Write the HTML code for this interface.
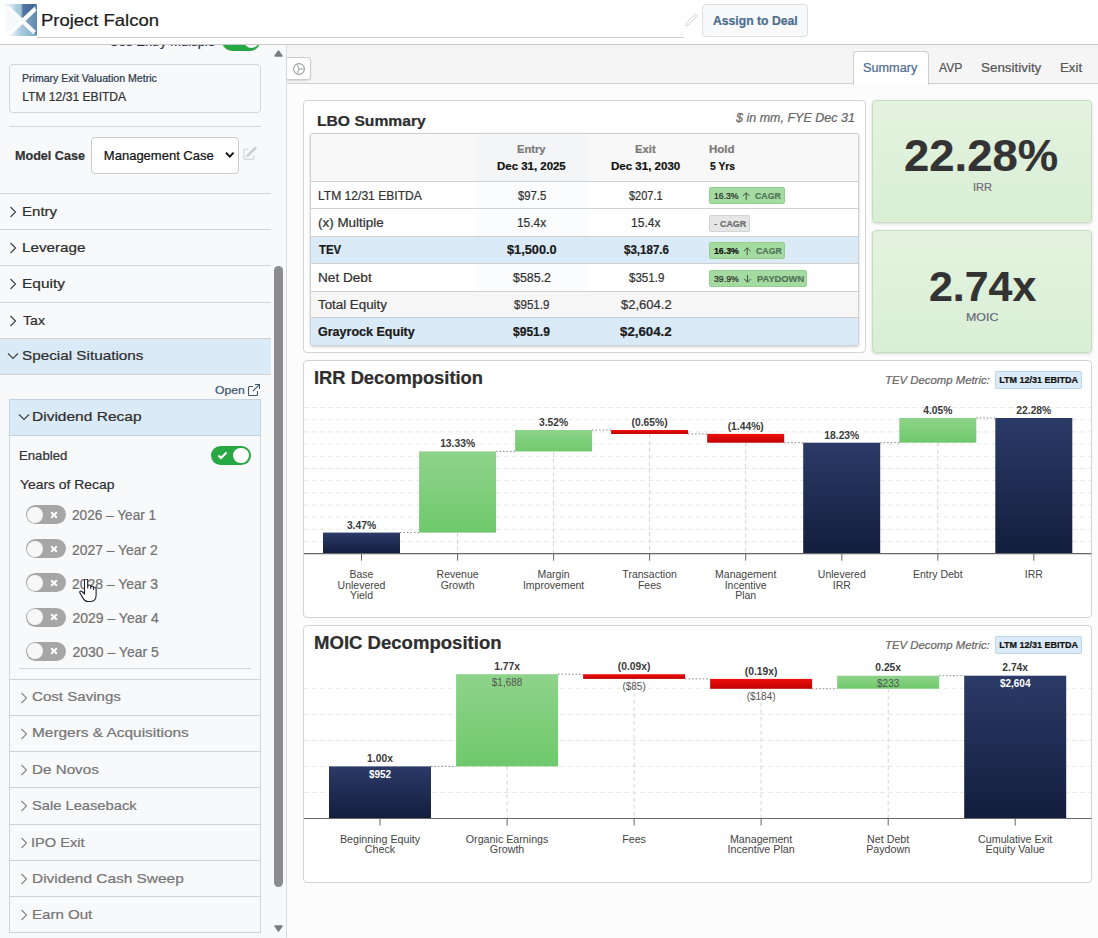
<!DOCTYPE html><html><head><meta charset="utf-8"><title>Project Falcon</title><style>
*{box-sizing:border-box;margin:0;padding:0}
html,body{width:1098px;height:938px;overflow:hidden;background:#fcfcfc;font-family:"Liberation Sans",sans-serif;color:#333}
.abs{position:absolute}
.t{position:absolute;white-space:nowrap;line-height:1;-webkit-text-stroke:0.22px currentColor}
#hdr{left:0;top:0;width:1098px;height:45px;background:#fff;border-bottom:1px solid #c9c9c9}
#side{left:0;top:45px;width:287px;height:893px;background:#f8f9fb;border-right:1px solid #dcdcdc}
#tabs{left:287px;top:45px;width:811px;height:39px;background:#f5f5f5;border-bottom:1px solid #cfcfcf}
.card{position:absolute;background:#fff;border:1px solid #d4d4d4;border-radius:4px}
.acc{position:absolute;left:0;width:271px;border-top:1px solid #d2d2d2}
.acc2{position:absolute;left:9px;width:252px;border:1px solid #d2d2d2}
.sw{position:absolute;width:40px;height:19px;border-radius:10px}
.row{position:absolute;left:311px;width:547px;border-top:1px solid #d0d0d0}
.bdg{position:absolute;border-radius:2px}
</style></head><body>
<div id="hdr" class="abs"></div>
<svg class="abs" style="left:5px;top:4px" width="32" height="32" viewBox="0 0 32 32">
<defs>
<linearGradient id="lt" x1="0" y1="0" x2="1" y2="0"><stop offset="0" stop-color="#e4eff8"/><stop offset="0.22" stop-color="#cfe3f2"/><stop offset="0.36" stop-color="#a9cddc"/><stop offset="0.5" stop-color="#a2c8d9"/><stop offset="0.56" stop-color="#5577a5"/><stop offset="1" stop-color="#3d5d92"/></linearGradient>
<linearGradient id="lr" x1="0" y1="0" x2="1" y2="0"><stop offset="0" stop-color="#86aecb"/><stop offset="1" stop-color="#5f88b0"/></linearGradient>
<linearGradient id="lb" x1="0" y1="0" x2="1" y2="0"><stop offset="0" stop-color="#edf4fa"/><stop offset="0.3" stop-color="#d3e4f3"/><stop offset="0.5" stop-color="#a9cbdc"/><stop offset="1" stop-color="#7fa9c6"/></linearGradient>
</defs>
<rect width="32" height="32" fill="#eff5fa"/>
<path d="M0 0 H32 L16 16 Z" fill="url(#lt)"/>
<path d="M32 0 V32 L16 16 Z" fill="url(#lr)"/>
<path d="M0 32 H32 L16 16 Z" fill="url(#lb)"/>
<path d="M0 3 L3 1 L31 27 L28 30 Z" fill="#fdfeff"/>
<path d="M29.5 3 L31.5 6.5 L5 32 L0 32 L0 30 Z" fill="#fdfeff"/>
<path d="M0 4 L13 16 L0 30 Z" fill="#fff" opacity="0.5"/>
</svg>
<div class="t" style="left:40.52px;top:20.5px;font-size:15.8px;color:#1c1c1c;font-weight:normal;font-style:normal;transform-origin:0 50%;transform:translate(0,-50%) scaleX(1.1685);">Project Falcon</div>
<div class="abs" style="left:37px;top:37px;width:647px;height:1px;background:#cdcdcd"></div>
<svg class="abs" style="left:684px;top:13px" width="14" height="14" viewBox="0 0 14 14"><path d="M1.6 12.6 L2.2 10.2 L10.6 1.8 a1.3 1.3 0 0 1 1.9 1.9 L4.1 12.1 Z M9.6 2.8 L11.5 4.7" fill="none" stroke="#cfcfcf" stroke-width="0.9"/></svg>
<div class="abs" style="left:702px;top:4px;width:106px;height:33px;border:1px solid #dcdfe3;border-radius:4px;background:#f8f9fa"></div>
<div class="t" style="left:713.15px;top:21.0px;font-size:12px;color:#4d6d8e;font-weight:bold;font-style:normal;transform-origin:0 50%;transform:translate(0,-50%) scaleX(1.0151);">Assign to Deal</div>
<div id="side" class="abs"></div>
<div id="tabs" class="abs"></div>
<div class="abs" style="left:200px;top:45px;width:70px;height:8px;overflow:hidden"><div class="abs" style="left:21.5px;top:-14px;width:38.5px;height:19.6px;border-radius:10px;background:#28a745"></div><div class="abs" style="left:43.5px;top:-12.3px;width:15.5px;height:15.5px;border-radius:8px;background:#fff"></div></div>
<div class="abs" style="left:108px;top:45px;width:110px;height:3.6px;overflow:hidden"><div class="t" style="left:1.5px;top:-9.6px;font-size:13px;color:#1e2a3c;transform-origin:0 0;transform:scaleX(1.0)">Use Entry Multiple</div></div>
<div class="abs" style="left:9px;top:64px;width:252px;height:49px;border:1px solid #cfd5dc;border-radius:4px;background:#f8f9fb"></div>
<div class="t" style="left:22.36px;top:78.5px;font-size:10px;color:#2c3a4c;font-weight:normal;font-style:normal;transform-origin:0 50%;transform:translate(0,-50%) scaleX(1.0561);">Primary Exit Valuation Metric</div>
<div class="t" style="left:22.23px;top:96.8px;font-size:12.1px;color:#333;font-weight:normal;font-style:normal;transform-origin:0 50%;transform:translate(0,-50%);">LTM 12/31 EBITDA</div>
<div class="abs" style="left:9px;top:126px;width:252px;height:1px;background:#d5d5d5"></div>
<div class="t" style="left:15.28px;top:155px;font-size:13px;color:#333;font-weight:bold;font-style:normal;transform-origin:0 50%;transform:translate(0,-50%) scaleX(0.9679);">Model Case</div>
<div class="abs" style="left:91px;top:137px;width:148px;height:37px;border:1px solid #ccc;border-radius:4px;background:#fff"></div>
<div class="t" style="left:103.86px;top:154.9px;font-size:13px;color:#111;font-weight:normal;font-style:normal;transform-origin:0 50%;transform:translate(0,-50%);">Management Case</div>
<svg class="abs" style="left:225px;top:151.3px" width="10" height="8" viewBox="0 0 10 8"><path d="M1 1.6 L4.8 5.6 L8.6 1.6" fill="none" stroke="#111" stroke-width="2"/></svg>
<svg class="abs" style="left:243px;top:146px" width="15" height="15" viewBox="0 0 15 15"><path d="M11 9 V12.3 a1 1 0 0 1 -1 1 H2 a1 1 0 0 1 -1 -1 V4.3 a1 1 0 0 1 1 -1 H5.5" fill="none" stroke="#d9dcdf" stroke-width="1.5"/><path d="M3.2 11.2 L3.8 8.6 L11.3 1.1 a1.2 1.2 0 0 1 1.9 1.9 L5.8 10.5 Z" fill="#cfcfcf"/></svg>
<div class="acc" style="top:193px;height:36px"></div>
<svg class="abs" style="left:9px;top:205.5px" width="8" height="12" viewBox="0 0 8 12"><path d="M1.5 1 L6.5 6 L1.5 11" fill="none" stroke="#444" stroke-width="1.2"/></svg>
<div class="t" style="left:21.70px;top:211.9px;font-size:13.5px;color:#2e2e2e;font-weight:normal;font-style:normal;transform-origin:0 50%;transform:translate(0,-50%) scaleX(1.1136);">Entry</div>
<div class="acc" style="top:229px;height:36px"></div>
<svg class="abs" style="left:9px;top:241.5px" width="8" height="12" viewBox="0 0 8 12"><path d="M1.5 1 L6.5 6 L1.5 11" fill="none" stroke="#444" stroke-width="1.2"/></svg>
<div class="t" style="left:21.68px;top:247.9px;font-size:13.5px;color:#2e2e2e;font-weight:normal;font-style:normal;transform-origin:0 50%;transform:translate(0,-50%) scaleX(1.1285);">Leverage</div>
<div class="acc" style="top:265px;height:37px"></div>
<svg class="abs" style="left:9px;top:277.5px" width="8" height="12" viewBox="0 0 8 12"><path d="M1.5 1 L6.5 6 L1.5 11" fill="none" stroke="#444" stroke-width="1.2"/></svg>
<div class="t" style="left:21.66px;top:283.9px;font-size:13.5px;color:#2e2e2e;font-weight:normal;font-style:normal;transform-origin:0 50%;transform:translate(0,-50%) scaleX(1.1440);">Equity</div>
<div class="acc" style="top:302px;height:36px"></div>
<svg class="abs" style="left:9px;top:314.5px" width="8" height="12" viewBox="0 0 8 12"><path d="M1.5 1 L6.5 6 L1.5 11" fill="none" stroke="#444" stroke-width="1.2"/></svg>
<div class="t" style="left:22.62px;top:320.9px;font-size:13.5px;color:#2e2e2e;font-weight:normal;font-style:normal;transform-origin:0 50%;transform:translate(0,-50%) scaleX(1.0443);">Tax</div>
<div class="acc" style="top:338px;height:37px;background:#dbeaf7;border-bottom:1px solid #d2d2d2"></div>
<svg class="abs" style="left:7px;top:352px" width="12" height="8" viewBox="0 0 12 8"><path d="M1 1.5 L6 6.5 L11 1.5" fill="none" stroke="#444" stroke-width="1.2"/></svg>
<div class="t" style="left:22.01px;top:356.2px;font-size:13.5px;color:#2e2e2e;font-weight:normal;font-style:normal;transform-origin:0 50%;transform:translate(0,-50%) scaleX(1.1313);">Special Situations</div>
<div class="t" style="left:214.85px;top:390px;font-size:11px;color:#3c5570;font-weight:normal;font-style:normal;transform-origin:0 50%;transform:translate(0,-50%) scaleX(1.1018);">Open</div>
<svg class="abs" style="left:247px;top:383px" width="14" height="14" viewBox="0 0 14 14"><path d="M10.5 8 V11.5 a1 1 0 0 1 -1 1 H2.5 a1 1 0 0 1 -1 -1 V4.5 a1 1 0 0 1 1 -1 H6" fill="none" stroke="#456" stroke-width="1.1"/><path d="M8 1.5 H12.5 V6 M12.5 1.5 L6 8" fill="none" stroke="#456" stroke-width="1.1"/></svg>
<div class="abs" style="left:9px;top:399px;width:252px;height:281px;border:1px solid #cfd5dc;background:#f8f9fb"></div>
<div class="abs" style="left:9px;top:399px;width:252px;height:37px;border:1px solid #c5d3e0;background:#dbeaf7"></div>
<svg class="abs" style="left:18px;top:412.8px" width="12" height="8" viewBox="0 0 12 8"><path d="M1 1.5 L6 6.5 L11 1.5" fill="none" stroke="#444" stroke-width="1.2"/></svg>
<div class="t" style="left:31.66px;top:416.8px;font-size:13.5px;color:#2e2e2e;font-weight:normal;font-style:normal;transform-origin:0 50%;transform:translate(0,-50%) scaleX(1.1495);">Dividend Recap</div>
<div class="t" style="left:19.45px;top:455.8px;font-size:12.7px;color:#333;font-weight:normal;font-style:normal;transform-origin:0 50%;transform:translate(0,-50%) scaleX(1.0365);">Enabled</div>
<div class="sw" style="left:211px;top:446px;background:#28a745"></div>
<div class="abs" style="left:233px;top:448px;width:16px;height:15px;border-radius:8px;background:#fff"></div>
<svg class="abs" style="left:217px;top:451px" width="11" height="9" viewBox="0 0 11 9"><path d="M1.5 4.5 L4 7 L9.5 1.5" fill="none" stroke="#fff" stroke-width="2.2"/></svg>
<div class="t" style="left:20.15px;top:484.6px;font-size:13.5px;color:#2e2e2e;font-weight:normal;font-style:normal;transform-origin:0 50%;transform:translate(0,-50%) scaleX(1.0283);">Years of Recap</div>
<div class="sw" style="left:26px;top:505.1px;background:#a6a6a6"></div>
<div class="abs" style="left:27px;top:506.6px;width:16px;height:16px;border-radius:8px;background:#f7f7f7"></div>
<svg class="abs" style="left:50px;top:510.6px" width="8" height="8" viewBox="0 0 8 8"><path d="M1.2 1.2 L6.8 6.8 M6.8 1.2 L1.2 6.8" fill="none" stroke="#fff" stroke-width="2"/></svg>
<div class="t" style="left:72.42px;top:515.4px;font-size:14px;color:#727272;font-weight:normal;font-style:normal;transform-origin:0 50%;transform:translate(0,-50%) scaleX(0.9735);">2026 – Year 1</div>
<div class="sw" style="left:26px;top:539.2px;background:#a6a6a6"></div>
<div class="abs" style="left:27px;top:540.7px;width:16px;height:16px;border-radius:8px;background:#f7f7f7"></div>
<svg class="abs" style="left:50px;top:544.7px" width="8" height="8" viewBox="0 0 8 8"><path d="M1.2 1.2 L6.8 6.8 M6.8 1.2 L1.2 6.8" fill="none" stroke="#fff" stroke-width="2"/></svg>
<div class="t" style="left:72.41px;top:549.5px;font-size:14px;color:#727272;font-weight:normal;font-style:normal;transform-origin:0 50%;transform:translate(0,-50%) scaleX(0.9908);">2027 – Year 2</div>
<div class="sw" style="left:26px;top:573.3px;background:#a6a6a6"></div>
<div class="abs" style="left:27px;top:574.8px;width:16px;height:16px;border-radius:8px;background:#f7f7f7"></div>
<svg class="abs" style="left:50px;top:578.8px" width="8" height="8" viewBox="0 0 8 8"><path d="M1.2 1.2 L6.8 6.8 M6.8 1.2 L1.2 6.8" fill="none" stroke="#fff" stroke-width="2"/></svg>
<div class="t" style="left:72.40px;top:583.5999999999999px;font-size:14px;color:#727272;font-weight:normal;font-style:normal;transform-origin:0 50%;transform:translate(0,-50%) scaleX(0.9951);">2028 – Year 3</div>
<div class="sw" style="left:26px;top:607.5px;background:#a6a6a6"></div>
<div class="abs" style="left:27px;top:609px;width:16px;height:16px;border-radius:8px;background:#f7f7f7"></div>
<svg class="abs" style="left:50px;top:613px" width="8" height="8" viewBox="0 0 8 8"><path d="M1.2 1.2 L6.8 6.8 M6.8 1.2 L1.2 6.8" fill="none" stroke="#fff" stroke-width="2"/></svg>
<div class="t" style="left:72.40px;top:617.8px;font-size:14px;color:#727272;font-weight:normal;font-style:normal;transform-origin:0 50%;transform:translate(0,-50%);">2029 – Year 4</div>
<div class="sw" style="left:26px;top:641.5px;background:#a6a6a6"></div>
<div class="abs" style="left:27px;top:643px;width:16px;height:16px;border-radius:8px;background:#f7f7f7"></div>
<svg class="abs" style="left:50px;top:647px" width="8" height="8" viewBox="0 0 8 8"><path d="M1.2 1.2 L6.8 6.8 M6.8 1.2 L1.2 6.8" fill="none" stroke="#fff" stroke-width="2"/></svg>
<div class="t" style="left:72.40px;top:651.8px;font-size:14px;color:#727272;font-weight:normal;font-style:normal;transform-origin:0 50%;transform:translate(0,-50%);">2030 – Year 5</div>
<div class="abs" style="left:19px;top:668px;width:232px;height:1px;background:#cfd5dc"></div>
<div class="acc2" style="top:679px;height:37px"></div>
<svg class="abs" style="left:20px;top:691.5px" width="8" height="12" viewBox="0 0 8 12"><path d="M1.5 1 L6.5 6 L1.5 11" fill="none" stroke="#888" stroke-width="1.2"/></svg>
<div class="t" style="left:32.05px;top:697.3px;font-size:13.5px;color:#757575;font-weight:normal;font-style:normal;transform-origin:0 50%;transform:translate(0,-50%) scaleX(1.1178);">Cost Savings</div>
<div class="acc2" style="top:715px;height:37px"></div>
<svg class="abs" style="left:20px;top:727.5px" width="8" height="12" viewBox="0 0 8 12"><path d="M1.5 1 L6.5 6 L1.5 11" fill="none" stroke="#888" stroke-width="1.2"/></svg>
<div class="t" style="left:31.57px;top:733.3px;font-size:13.5px;color:#757575;font-weight:normal;font-style:normal;transform-origin:0 50%;transform:translate(0,-50%) scaleX(1.1419);">Mergers &amp; Acquisitions</div>
<div class="acc2" style="top:751px;height:37px"></div>
<svg class="abs" style="left:20px;top:763.5px" width="8" height="12" viewBox="0 0 8 12"><path d="M1.5 1 L6.5 6 L1.5 11" fill="none" stroke="#888" stroke-width="1.2"/></svg>
<div class="t" style="left:31.58px;top:770.0999999999999px;font-size:13.5px;color:#757575;font-weight:normal;font-style:normal;transform-origin:0 50%;transform:translate(0,-50%) scaleX(1.1263);">De Novos</div>
<div class="acc2" style="top:787px;height:38px"></div>
<svg class="abs" style="left:20px;top:799.5px" width="8" height="12" viewBox="0 0 8 12"><path d="M1.5 1 L6.5 6 L1.5 11" fill="none" stroke="#888" stroke-width="1.2"/></svg>
<div class="t" style="left:32.14px;top:806.3px;font-size:13.5px;color:#757575;font-weight:normal;font-style:normal;transform-origin:0 50%;transform:translate(0,-50%) scaleX(1.0886);">Sale Leaseback</div>
<div class="acc2" style="top:824px;height:37px"></div>
<svg class="abs" style="left:20px;top:836.5px" width="8" height="12" viewBox="0 0 8 12"><path d="M1.5 1 L6.5 6 L1.5 11" fill="none" stroke="#888" stroke-width="1.2"/></svg>
<div class="t" style="left:31.49px;top:842.5999999999999px;font-size:13.5px;color:#757575;font-weight:normal;font-style:normal;transform-origin:0 50%;transform:translate(0,-50%) scaleX(1.0810);">IPO Exit</div>
<div class="acc2" style="top:860px;height:37px"></div>
<svg class="abs" style="left:20px;top:872.5px" width="8" height="12" viewBox="0 0 8 12"><path d="M1.5 1 L6.5 6 L1.5 11" fill="none" stroke="#888" stroke-width="1.2"/></svg>
<div class="t" style="left:31.57px;top:878.5999999999999px;font-size:13.5px;color:#757575;font-weight:normal;font-style:normal;transform-origin:0 50%;transform:translate(0,-50%) scaleX(1.1424);">Dividend Cash Sweep</div>
<div class="acc2" style="top:896px;height:37px"></div>
<svg class="abs" style="left:20px;top:908.5px" width="8" height="12" viewBox="0 0 8 12"><path d="M1.5 1 L6.5 6 L1.5 11" fill="none" stroke="#888" stroke-width="1.2"/></svg>
<div class="t" style="left:31.59px;top:914.5999999999999px;font-size:13.5px;color:#757575;font-weight:normal;font-style:normal;transform-origin:0 50%;transform:translate(0,-50%) scaleX(1.1163);">Earn Out</div>
<svg class="abs" style="left:274px;top:50px" width="9" height="7" viewBox="0 0 9 7"><path d="M4.5 1 L8 6 H1 Z" fill="#7c7c7c" stroke="#7c7c7c" stroke-width="1.4" stroke-linejoin="round"/></svg>
<svg class="abs" style="left:274px;top:925px" width="9" height="7" viewBox="0 0 9 7"><path d="M4.5 6 L8 1 H1 Z" fill="#7c7c7c" stroke="#7c7c7c" stroke-width="1.4" stroke-linejoin="round"/></svg>
<div class="abs" style="left:274px;top:266px;width:9px;height:621px;border-radius:5px;background:#8c8c8c"></div>
<div class="abs" style="left:287px;top:57px;width:24px;height:23px;background:#fefefe;border:1px solid #cdcdcd;border-left:none;border-radius:0 4px 4px 0;box-shadow:0 1px 2px rgba(0,0,0,0.12)"></div>
<svg class="abs" style="left:292px;top:61.9px" width="14" height="14" viewBox="0 0 14 14"><circle cx="7" cy="7" r="5.4" fill="none" stroke="#9aa0a6" stroke-width="1.1"/><path d="M5.4 2.6 Q8.2 7 5.4 11.4 M7 7 H11.6" stroke="#9aa0a6" stroke-width="1" fill="none"/></svg>
<div class="abs" style="left:853px;top:51px;width:76px;height:34px;background:#fff;border:1px solid #cfcfcf;border-bottom:none;border-radius:4px 4px 0 0"></div>
<div class="t" style="left:863.43px;top:68.3px;font-size:12.5px;color:#4d6d8e;font-weight:normal;font-style:normal;transform-origin:0 50%;transform:translate(0,-50%) scaleX(1.0163);">Summary</div>
<div class="t" style="left:939.20px;top:68px;font-size:12.5px;color:#555;font-weight:normal;font-style:normal;transform-origin:0 50%;transform:translate(0,-50%) scaleX(0.9728);">AVP</div>
<div class="t" style="left:980.90px;top:68px;font-size:12.5px;color:#555;font-weight:normal;font-style:normal;transform-origin:0 50%;transform:translate(0,-50%) scaleX(1.0721);">Sensitivity</div>
<div class="t" style="left:1060.34px;top:68px;font-size:12.5px;color:#555;font-weight:normal;font-style:normal;transform-origin:0 50%;transform:translate(0,-50%) scaleX(1.0582);">Exit</div>
<div class="card" style="left:303px;top:100px;width:563px;height:253px"></div>
<div class="t" style="left:317.18px;top:120.5px;font-size:14px;color:#2e2e2e;font-weight:bold;font-style:normal;transform-origin:0 50%;transform:translate(0,-50%) scaleX(1.1179);">LBO Summary</div>
<div class="t" style="left:736.06px;top:118px;font-size:12.5px;color:#666;font-weight:normal;font-style:italic;transform-origin:0 50%;transform:translate(0,-50%);">$ in mm, FYE Dec 31</div>
<div class="abs" style="left:310px;top:133px;width:549px;height:213px;border:1px solid #d0d0d0;border-radius:3px;background:#fff;box-shadow:0 1px 3px rgba(0,0,0,0.2)"></div>
<div class="abs" style="left:311px;top:134px;width:547px;height:47px;background:#f8f8f8;border-radius:3px 3px 0 0"></div>
<div class="abs" style="left:476px;top:134px;width:112px;height:183px;background:rgba(120,140,170,0.028)"></div>
<div class="row" style="top:181px;height:27px;"></div>
<div class="t" style="left:317.73px;top:195.7px;font-size:12px;color:#333;font-weight:normal;font-style:normal;transform-origin:0 50%;transform:translate(0,-50%) scaleX(1.0061);">LTM 12/31 EBITDA</div>
<div class="t" style="left:517.84px;top:195.7px;font-size:12.5px;color:#333;font-weight:normal;font-style:normal;transform-origin:0 50%;transform:translate(0,-50%) scaleX(0.9045);">$97.5</div>
<div class="t" style="left:629.39px;top:195.7px;font-size:12.5px;color:#333;font-weight:normal;font-style:normal;transform-origin:0 50%;transform:translate(0,-50%) scaleX(0.8785);">$207.1</div>
<div class="row" style="top:208px;height:28px;"></div>
<div class="t" style="left:317.89px;top:222.8px;font-size:12px;color:#333;font-weight:normal;font-style:normal;transform-origin:0 50%;transform:translate(0,-50%) scaleX(1.1186);">(x) Multiple</div>
<div class="t" style="left:516.86px;top:222.8px;font-size:12.5px;color:#333;font-weight:normal;font-style:normal;transform-origin:0 50%;transform:translate(0,-50%) scaleX(0.9525);">15.4x</div>
<div class="t" style="left:630.90px;top:222.8px;font-size:12.5px;color:#333;font-weight:normal;font-style:normal;transform-origin:0 50%;transform:translate(0,-50%) scaleX(0.9627);">15.4x</div>
<div class="row" style="top:236px;height:27px;background:#dbeaf7;"></div>
<div class="t" style="left:318.59px;top:250.4px;font-size:12px;color:#1a1a1a;font-weight:bold;font-style:normal;transform-origin:0 50%;transform:translate(0,-50%) scaleX(0.9456);">TEV</div>
<div class="t" style="left:507.16px;top:250.4px;font-size:12.5px;color:#1a1a1a;font-weight:bold;font-style:normal;transform-origin:0 50%;transform:translate(0,-50%) scaleX(1.0201);">$1,500.0</div>
<div class="t" style="left:623.63px;top:250.4px;font-size:12.5px;color:#1a1a1a;font-weight:bold;font-style:normal;transform-origin:0 50%;transform:translate(0,-50%) scaleX(0.9250);">$3,187.6</div>
<div class="row" style="top:263px;height:28px;"></div>
<div class="t" style="left:317.61px;top:278px;font-size:12px;color:#333;font-weight:normal;font-style:normal;transform-origin:0 50%;transform:translate(0,-50%) scaleX(1.1334);">Net Debt</div>
<div class="t" style="left:513.03px;top:278px;font-size:12.5px;color:#333;font-weight:normal;font-style:normal;transform-origin:0 50%;transform:translate(0,-50%) scaleX(0.9947);">$585.2</div>
<div class="t" style="left:628.53px;top:278px;font-size:12.5px;color:#333;font-weight:normal;font-style:normal;transform-origin:0 50%;transform:translate(0,-50%) scaleX(0.9238);">$351.9</div>
<div class="row" style="top:291px;height:26px;background:#f6f6f6;"></div>
<div class="t" style="left:318.43px;top:304.9px;font-size:12px;color:#333;font-weight:normal;font-style:normal;transform-origin:0 50%;transform:translate(0,-50%) scaleX(1.1100);">Total Equity</div>
<div class="t" style="left:514.28px;top:304.9px;font-size:12.5px;color:#333;font-weight:normal;font-style:normal;transform-origin:0 50%;transform:translate(0,-50%) scaleX(0.9265);">$951.9</div>
<div class="t" style="left:620.97px;top:304.9px;font-size:12.5px;color:#333;font-weight:normal;font-style:normal;transform-origin:0 50%;transform:translate(0,-50%) scaleX(1.0402);">$2,604.2</div>
<div class="row" style="top:317px;height:28px;background:#dbeaf7;"></div>
<div class="t" style="left:318.20px;top:331.9px;font-size:12px;color:#1a1a1a;font-weight:bold;font-style:normal;transform-origin:0 50%;transform:translate(0,-50%) scaleX(1.0438);">Grayrock Equity</div>
<div class="t" style="left:513.47px;top:331.9px;font-size:12.5px;color:#1a1a1a;font-weight:bold;font-style:normal;transform-origin:0 50%;transform:translate(0,-50%) scaleX(0.9648);">$951.9</div>
<div class="t" style="left:620.35px;top:331.9px;font-size:12.5px;color:#1a1a1a;font-weight:bold;font-style:normal;transform-origin:0 50%;transform:translate(0,-50%) scaleX(1.0618);">$2,604.2</div>
<div class="t" style="left:517.43px;top:149px;font-size:11px;color:#7a7a7a;font-weight:bold;font-style:normal;transform-origin:0 50%;transform:translate(0,-50%) scaleX(1.0134);">Entry</div>
<div class="t" style="left:497.21px;top:166px;font-size:11px;color:#111;font-weight:bold;font-style:normal;transform-origin:0 50%;transform:translate(0,-50%) scaleX(1.0405);">Dec 31, 2025</div>
<div class="t" style="left:635.07px;top:149px;font-size:11px;color:#7a7a7a;font-weight:bold;font-style:normal;transform-origin:0 50%;transform:translate(0,-50%) scaleX(1.0256);">Exit</div>
<div class="t" style="left:611.15px;top:166px;font-size:11px;color:#111;font-weight:bold;font-style:normal;transform-origin:0 50%;transform:translate(0,-50%) scaleX(1.0478);">Dec 31, 2030</div>
<div class="t" style="left:709.35px;top:149px;font-size:11px;color:#7a7a7a;font-weight:bold;font-style:normal;transform-origin:0 50%;transform:translate(0,-50%) scaleX(1.0483);">Hold</div>
<div class="t" style="left:709.79px;top:166px;font-size:11px;color:#111;font-weight:bold;font-style:normal;transform-origin:0 50%;transform:translate(0,-50%) scaleX(0.9380);">5 Yrs</div>
<div class="bdg" style="left:709.4px;top:187.3px;width:75.60000000000002px;height:17.0px;background:#a3dba0;border:1px solid #93d08f"></div>
<div class="t" style="left:713.65px;top:196.2px;font-size:9px;color:#2a2a2a;font-weight:normal;font-style:normal;transform-origin:0 50%;transform:translate(0,-50%) scaleX(0.9623);">16.3%</div>
<svg class="abs" style="left:0;top:0" width="1098" height="300" viewBox="0 0 1098 300"><path d="M746.2 200.1 V192.79999999999998 M742.9000000000001 196.0 L746.2 192.7 L749.5 196.0" fill="none" stroke="#3a4a3a" stroke-width="0.95"/></svg>
<div class="t" style="left:755.45px;top:196.2px;font-size:9px;color:#53745a;font-weight:bold;font-style:normal;transform-origin:0 50%;transform:translate(0,-50%) scaleX(0.9722);">CAGR</div>
<div class="bdg" style="left:709.4px;top:214.5px;width:40.30000000000007px;height:17.900000000000006px;background:#e6e6e6;border:1px solid #d2d2d2"></div>
<div class="t" style="left:713.86px;top:223.7px;font-size:9px;color:#666;font-weight:normal;font-style:normal;transform-origin:0 50%;transform:translate(0,-50%) scaleX(1.0884);">-</div>
<div class="t" style="left:720.04px;top:223.7px;font-size:9px;color:#6b6b6b;font-weight:bold;font-style:normal;transform-origin:0 50%;transform:translate(0,-50%) scaleX(0.9877);">CAGR</div>
<div class="bdg" style="left:709.4px;top:242.4px;width:76.10000000000002px;height:16.99999999999997px;background:#a3dba0;border:1px solid #93d08f"></div>
<div class="t" style="left:713.77px;top:251.3px;font-size:9px;color:#111;font-weight:bold;font-style:normal;transform-origin:0 50%;transform:translate(0,-50%) scaleX(0.9737);">16.3%</div>
<svg class="abs" style="left:0;top:0" width="1098" height="300" viewBox="0 0 1098 300"><path d="M747.2 255.20000000000002 V247.9 M743.9000000000001 251.10000000000002 L747.2 247.8 L750.5 251.10000000000002" fill="none" stroke="#3a4a3a" stroke-width="0.95"/></svg>
<div class="t" style="left:756.15px;top:251.3px;font-size:9px;color:#53745a;font-weight:bold;font-style:normal;transform-origin:0 50%;transform:translate(0,-50%) scaleX(0.9722);">CAGR</div>
<div class="bdg" style="left:709.4px;top:269.5px;width:97.30000000000007px;height:17.80000000000001px;background:#a3dba0;border:1px solid #93d08f"></div>
<div class="t" style="left:713.95px;top:278.7px;font-size:9px;color:#2a2a2a;font-weight:normal;font-style:normal;transform-origin:0 50%;transform:translate(0,-50%) scaleX(0.9702);">39.9%</div>
<svg class="abs" style="left:0;top:0" width="1098" height="300" viewBox="0 0 1098 300"><path d="M747.4 274.8 V282.09999999999997 M744.1 278.9 L747.4 282.2 L750.6999999999999 278.9" fill="none" stroke="#3a4a3a" stroke-width="0.95"/></svg>
<div class="t" style="left:756.59px;top:278.7px;font-size:9px;color:#53745a;font-weight:bold;font-style:normal;transform-origin:0 50%;transform:translate(0,-50%) scaleX(1.0355);">PAYDOWN</div>
<div class="abs" style="left:872px;top:100px;width:220px;height:123px;border:1px solid #c5dcc0;border-radius:4px;background:linear-gradient(#e3f3df,#daeed5);box-shadow:0 1px 3px rgba(0,0,0,0.15)"></div>
<div class="t" style="left:904.46px;top:156.1px;font-size:44.6px;color:#333;font-weight:bold;font-style:normal;transform-origin:0 50%;transform:translate(0,-50%) scaleX(1.0185);">22.28%</div>
<div class="t" style="left:972.86px;top:187.7px;font-size:11.8px;color:#6a6a78;font-weight:normal;font-style:normal;transform-origin:0 50%;transform:translate(0,-50%) scaleX(0.9357);">IRR</div>
<div class="abs" style="left:872px;top:230px;width:220px;height:123px;border:1px solid #c5dcc0;border-radius:4px;background:linear-gradient(#e3f3df,#daeed5);box-shadow:0 1px 3px rgba(0,0,0,0.15)"></div>
<div class="t" style="left:928.55px;top:286.8px;font-size:43.3px;color:#333;font-weight:bold;font-style:normal;transform-origin:0 50%;transform:translate(0,-50%) scaleX(0.9904);">2.74x</div>
<div class="t" style="left:966.16px;top:317.7px;font-size:11.8px;color:#6a6a78;font-weight:normal;font-style:normal;transform-origin:0 50%;transform:translate(0,-50%) scaleX(1.0496);">MOIC</div>
<div class="card" style="left:303px;top:360px;width:789px;height:258px"></div>
<div class="t" style="left:313.61px;top:378.4px;font-size:18px;color:#2e2e2e;font-weight:bold;font-style:normal;transform-origin:0 50%;transform:translate(0,-50%) scaleX(1.0177);">IRR Decomposition</div>
<div class="t" style="left:884.78px;top:381.0px;font-size:11.5px;color:#666;font-weight:normal;font-style:italic;transform-origin:0 50%;transform:translate(0,-50%) scaleX(0.9876);">TEV Decomp Metric:</div>
<div class="abs" style="left:995px;top:371px;width:87px;height:18px;background:#dbeaf7;border:1px solid #bcd6ee;border-radius:2px"></div>
<div class="t" style="left:999.22px;top:380.4px;font-size:9px;color:#111;font-weight:bold;font-style:normal;transform-origin:0 50%;transform:translate(0,-50%);">LTM 12/31 EBITDA</div>
<div class="card" style="left:303px;top:625px;width:789px;height:258px"></div>
<div class="t" style="left:313.59px;top:643.4px;font-size:18px;color:#2e2e2e;font-weight:bold;font-style:normal;transform-origin:0 50%;transform:translate(0,-50%) scaleX(1.0304);">MOIC Decomposition</div>
<div class="t" style="left:884.78px;top:646.0px;font-size:11.5px;color:#666;font-weight:normal;font-style:italic;transform-origin:0 50%;transform:translate(0,-50%) scaleX(0.9876);">TEV Decomp Metric:</div>
<div class="abs" style="left:995px;top:636px;width:87px;height:18px;background:#dbeaf7;border:1px solid #bcd6ee;border-radius:2px"></div>
<div class="t" style="left:999.22px;top:645.4px;font-size:9px;color:#111;font-weight:bold;font-style:normal;transform-origin:0 50%;transform:translate(0,-50%);">LTM 12/31 EBITDA</div>
<svg class="abs" style="left:0;top:0;pointer-events:none" width="1098" height="938" viewBox="0 0 1098 938" font-family="Liberation Sans, sans-serif"><defs><linearGradient id="gn" x1="0" y1="0" x2="0" y2="1"><stop offset="0" stop-color="#2b3a67"/><stop offset="1" stop-color="#131d3d"/></linearGradient><linearGradient id="gg" x1="0" y1="0" x2="0" y2="1"><stop offset="0" stop-color="#8ed38a"/><stop offset="1" stop-color="#6fc96c"/></linearGradient><linearGradient id="gr" x1="0" y1="0" x2="0" y2="1"><stop offset="0" stop-color="#f01010"/><stop offset="1" stop-color="#c00000"/></linearGradient></defs>
<line x1="304.5" x2="1091.5" y1="541.5" y2="541.5" stroke="#e4e4e4" stroke-width="1" stroke-dasharray="4 4"/>
<line x1="304.5" x2="1091.5" y1="529.3" y2="529.3" stroke="#e4e4e4" stroke-width="1" stroke-dasharray="4 4"/>
<line x1="304.5" x2="1091.5" y1="517.2" y2="517.2" stroke="#e4e4e4" stroke-width="1" stroke-dasharray="4 4"/>
<line x1="304.5" x2="1091.5" y1="505.0" y2="505.0" stroke="#e4e4e4" stroke-width="1" stroke-dasharray="4 4"/>
<line x1="304.5" x2="1091.5" y1="492.8" y2="492.8" stroke="#e4e4e4" stroke-width="1" stroke-dasharray="4 4"/>
<line x1="304.5" x2="1091.5" y1="480.6" y2="480.6" stroke="#e4e4e4" stroke-width="1" stroke-dasharray="4 4"/>
<line x1="304.5" x2="1091.5" y1="468.4" y2="468.4" stroke="#e4e4e4" stroke-width="1" stroke-dasharray="4 4"/>
<line x1="304.5" x2="1091.5" y1="456.3" y2="456.3" stroke="#e4e4e4" stroke-width="1" stroke-dasharray="4 4"/>
<line x1="304.5" x2="1091.5" y1="444.1" y2="444.1" stroke="#e4e4e4" stroke-width="1" stroke-dasharray="4 4"/>
<line x1="304.5" x2="1091.5" y1="431.9" y2="431.9" stroke="#e4e4e4" stroke-width="1" stroke-dasharray="4 4"/>
<line x1="304.5" x2="1091.5" y1="419.7" y2="419.7" stroke="#e4e4e4" stroke-width="1" stroke-dasharray="4 4"/>
<line x1="304.5" x2="1091.5" y1="407.5" y2="407.5" stroke="#e4e4e4" stroke-width="1" stroke-dasharray="4 4"/>
<line x1="361.5" x2="361.5" y1="553.7" y2="553.7" stroke="#d4d4d4" stroke-width="1" stroke-dasharray="4 3"/>
<rect x="323.0" y="532.6" width="77" height="21.1" fill="url(#gn)"/>
<line x1="400.0" x2="419.1" y1="532.6" y2="532.6" stroke="#888" stroke-width="1" stroke-dasharray="1.5 2"/>
<text x="361.5" y="528.6" text-anchor="middle" font-size="10.3" font-weight="bold" fill="#3a3a3a">3.47%</text>
<line x1="361.5" x2="361.5" y1="553.7" y2="560.7" stroke="#666" stroke-width="1"/>
<text x="361.5" y="578.3" text-anchor="middle" font-size="10.5" fill="#444">Base</text>
<text x="361.5" y="588.7" text-anchor="middle" font-size="10.5" fill="#444">Unlevered</text>
<text x="361.5" y="599.1" text-anchor="middle" font-size="10.5" fill="#444">Yield</text>
<line x1="457.6" x2="457.6" y1="532.6" y2="553.7" stroke="#d4d4d4" stroke-width="1" stroke-dasharray="4 3"/>
<rect x="419.1" y="451.4" width="77" height="81.2" fill="url(#gg)"/>
<line x1="496.1" x2="515.1" y1="451.4" y2="451.4" stroke="#888" stroke-width="1" stroke-dasharray="1.5 2"/>
<text x="457.6" y="447.4" text-anchor="middle" font-size="10.3" font-weight="bold" fill="#3a3a3a">13.33%</text>
<line x1="457.6" x2="457.6" y1="553.7" y2="560.7" stroke="#666" stroke-width="1"/>
<text x="457.6" y="578.3" text-anchor="middle" font-size="10.5" fill="#444">Revenue</text>
<text x="457.6" y="588.7" text-anchor="middle" font-size="10.5" fill="#444">Growth</text>
<line x1="553.6" x2="553.6" y1="451.4" y2="553.7" stroke="#d4d4d4" stroke-width="1" stroke-dasharray="4 3"/>
<rect x="515.1" y="430.0" width="77" height="21.4" fill="url(#gg)"/>
<line x1="592.1" x2="611.1" y1="430.0" y2="430.0" stroke="#888" stroke-width="1" stroke-dasharray="1.5 2"/>
<text x="553.6" y="426.0" text-anchor="middle" font-size="10.3" font-weight="bold" fill="#3a3a3a">3.52%</text>
<line x1="553.6" x2="553.6" y1="553.7" y2="560.7" stroke="#666" stroke-width="1"/>
<text x="553.6" y="578.3" text-anchor="middle" font-size="10.5" fill="#444">Margin</text>
<text x="553.6" y="588.7" text-anchor="middle" font-size="10.5" fill="#444">Improvement</text>
<line x1="649.6" x2="649.6" y1="433.9" y2="553.7" stroke="#d4d4d4" stroke-width="1" stroke-dasharray="4 3"/>
<rect x="611.1" y="430.0" width="77" height="4.0" fill="url(#gr)"/>
<line x1="688.1" x2="707.2" y1="433.9" y2="433.9" stroke="#888" stroke-width="1" stroke-dasharray="1.5 2"/>
<text x="649.6" y="426.0" text-anchor="middle" font-size="10.3" font-weight="bold" fill="#3a3a3a">(0.65%)</text>
<line x1="649.6" x2="649.6" y1="553.7" y2="560.7" stroke="#666" stroke-width="1"/>
<text x="649.6" y="578.3" text-anchor="middle" font-size="10.5" fill="#444">Transaction</text>
<text x="649.6" y="588.7" text-anchor="middle" font-size="10.5" fill="#444">Fees</text>
<line x1="745.7" x2="745.7" y1="442.7" y2="553.7" stroke="#d4d4d4" stroke-width="1" stroke-dasharray="4 3"/>
<rect x="707.2" y="433.9" width="77" height="8.8" fill="url(#gr)"/>
<line x1="784.2" x2="803.2" y1="442.7" y2="442.7" stroke="#888" stroke-width="1" stroke-dasharray="1.5 2"/>
<text x="745.7" y="429.9" text-anchor="middle" font-size="10.3" font-weight="bold" fill="#3a3a3a">(1.44%)</text>
<line x1="745.7" x2="745.7" y1="553.7" y2="560.7" stroke="#666" stroke-width="1"/>
<text x="745.7" y="578.3" text-anchor="middle" font-size="10.5" fill="#444">Management</text>
<text x="745.7" y="588.7" text-anchor="middle" font-size="10.5" fill="#444">Incentive</text>
<text x="745.7" y="599.1" text-anchor="middle" font-size="10.5" fill="#444">Plan</text>
<line x1="841.8" x2="841.8" y1="553.7" y2="553.7" stroke="#d4d4d4" stroke-width="1" stroke-dasharray="4 3"/>
<rect x="803.2" y="442.7" width="77" height="111.0" fill="url(#gn)"/>
<line x1="880.2" x2="899.3" y1="442.7" y2="442.7" stroke="#888" stroke-width="1" stroke-dasharray="1.5 2"/>
<text x="841.8" y="438.7" text-anchor="middle" font-size="10.3" font-weight="bold" fill="#3a3a3a">18.23%</text>
<line x1="841.8" x2="841.8" y1="553.7" y2="560.7" stroke="#666" stroke-width="1"/>
<text x="841.8" y="578.3" text-anchor="middle" font-size="10.5" fill="#444">Unlevered</text>
<text x="841.8" y="588.7" text-anchor="middle" font-size="10.5" fill="#444">IRR</text>
<line x1="937.8" x2="937.8" y1="442.7" y2="553.7" stroke="#d4d4d4" stroke-width="1" stroke-dasharray="4 3"/>
<rect x="899.3" y="418.0" width="77" height="24.7" fill="url(#gg)"/>
<line x1="976.3" x2="995.3" y1="418.0" y2="418.0" stroke="#888" stroke-width="1" stroke-dasharray="1.5 2"/>
<text x="937.8" y="414.0" text-anchor="middle" font-size="10.3" font-weight="bold" fill="#3a3a3a">4.05%</text>
<line x1="937.8" x2="937.8" y1="553.7" y2="560.7" stroke="#666" stroke-width="1"/>
<text x="937.8" y="578.3" text-anchor="middle" font-size="10.5" fill="#444">Entry Debt</text>
<line x1="1033.8" x2="1033.8" y1="553.7" y2="553.7" stroke="#d4d4d4" stroke-width="1" stroke-dasharray="4 3"/>
<rect x="995.3" y="418.0" width="77" height="135.7" fill="url(#gn)"/>
<text x="1033.8" y="414.0" text-anchor="middle" font-size="10.3" font-weight="bold" fill="#3a3a3a">22.28%</text>
<line x1="1033.8" x2="1033.8" y1="553.7" y2="560.7" stroke="#666" stroke-width="1"/>
<text x="1033.8" y="578.3" text-anchor="middle" font-size="10.5" fill="#444">IRR</text>
<line x1="304" x2="1091.5" y1="553.7" y2="553.7" stroke="#666" stroke-width="1.2"/>
<line x1="304.5" x2="1091.5" y1="792.5" y2="792.5" stroke="#e4e4e4" stroke-width="1" stroke-dasharray="4 4"/>
<line x1="304.5" x2="1091.5" y1="766.4" y2="766.4" stroke="#e4e4e4" stroke-width="1" stroke-dasharray="4 4"/>
<line x1="304.5" x2="1091.5" y1="740.4" y2="740.4" stroke="#e4e4e4" stroke-width="1" stroke-dasharray="4 4"/>
<line x1="304.5" x2="1091.5" y1="714.3" y2="714.3" stroke="#e4e4e4" stroke-width="1" stroke-dasharray="4 4"/>
<line x1="304.5" x2="1091.5" y1="688.2" y2="688.2" stroke="#e4e4e4" stroke-width="1" stroke-dasharray="4 4"/>
<line x1="380.0" x2="380.0" y1="818.5" y2="818.5" stroke="#d4d4d4" stroke-width="1" stroke-dasharray="4 3"/>
<rect x="329.0" y="766.4" width="102" height="52.1" fill="url(#gn)"/>
<line x1="431.0" x2="456.1" y1="766.4" y2="766.4" stroke="#888" stroke-width="1" stroke-dasharray="1.5 2"/>
<text x="380.0" y="762.0" text-anchor="middle" font-size="10.3" font-weight="bold" fill="#3a3a3a">1.00x</text>
<text x="380.0" y="778.1" text-anchor="middle" font-size="10" font-weight="bold" fill="#fff">$952</text>
<line x1="380.0" x2="380.0" y1="818.5" y2="825.5" stroke="#666" stroke-width="1"/>
<text x="380.0" y="843.3" text-anchor="middle" font-size="10.7" fill="#444">Beginning Equity</text>
<text x="380.0" y="853.3" text-anchor="middle" font-size="10.7" fill="#444">Check</text>
<line x1="507.1" x2="507.1" y1="766.4" y2="818.5" stroke="#d4d4d4" stroke-width="1" stroke-dasharray="4 3"/>
<rect x="456.1" y="674.2" width="102" height="92.2" fill="url(#gg)"/>
<line x1="558.0" x2="583.1" y1="674.2" y2="674.2" stroke="#888" stroke-width="1" stroke-dasharray="1.5 2"/>
<text x="507.1" y="669.8" text-anchor="middle" font-size="10.3" font-weight="bold" fill="#3a3a3a">1.77x</text>
<text x="507.1" y="685.9" text-anchor="middle" font-size="10" font-weight="normal" fill="#555">$1,688</text>
<line x1="507.1" x2="507.1" y1="818.5" y2="825.5" stroke="#666" stroke-width="1"/>
<text x="507.1" y="843.3" text-anchor="middle" font-size="10.7" fill="#444">Organic Earnings</text>
<text x="507.1" y="853.3" text-anchor="middle" font-size="10.7" fill="#444">Growth</text>
<line x1="634.1" x2="634.1" y1="678.9" y2="818.5" stroke="#d4d4d4" stroke-width="1" stroke-dasharray="4 3"/>
<rect x="583.1" y="674.2" width="102" height="4.7" fill="url(#gr)"/>
<line x1="685.1" x2="710.1" y1="678.9" y2="678.9" stroke="#888" stroke-width="1" stroke-dasharray="1.5 2"/>
<text x="634.1" y="669.8" text-anchor="middle" font-size="10.3" font-weight="bold" fill="#3a3a3a">(0.09x)</text>
<text x="634.1" y="690.1" text-anchor="middle" font-size="10" font-weight="normal" fill="#555">($85)</text>
<line x1="634.1" x2="634.1" y1="818.5" y2="825.5" stroke="#666" stroke-width="1"/>
<text x="634.1" y="843.3" text-anchor="middle" font-size="10.7" fill="#444">Fees</text>
<line x1="761.1" x2="761.1" y1="688.8" y2="818.5" stroke="#d4d4d4" stroke-width="1" stroke-dasharray="4 3"/>
<rect x="710.1" y="678.9" width="102" height="9.9" fill="url(#gr)"/>
<line x1="812.1" x2="837.2" y1="688.8" y2="688.8" stroke="#888" stroke-width="1" stroke-dasharray="1.5 2"/>
<text x="761.1" y="674.5" text-anchor="middle" font-size="10.3" font-weight="bold" fill="#3a3a3a">(0.19x)</text>
<text x="761.1" y="700.0" text-anchor="middle" font-size="10" font-weight="normal" fill="#555">($184)</text>
<line x1="761.1" x2="761.1" y1="818.5" y2="825.5" stroke="#666" stroke-width="1"/>
<text x="761.1" y="843.3" text-anchor="middle" font-size="10.7" fill="#444">Management</text>
<text x="761.1" y="853.3" text-anchor="middle" font-size="10.7" fill="#444">Incentive Plan</text>
<line x1="888.2" x2="888.2" y1="688.8" y2="818.5" stroke="#d4d4d4" stroke-width="1" stroke-dasharray="4 3"/>
<rect x="837.2" y="675.7" width="102" height="13.0" fill="url(#gg)"/>
<line x1="939.2" x2="964.2" y1="675.7" y2="675.7" stroke="#888" stroke-width="1" stroke-dasharray="1.5 2"/>
<text x="888.2" y="671.3" text-anchor="middle" font-size="10.3" font-weight="bold" fill="#3a3a3a">0.25x</text>
<text x="888.2" y="687.4" text-anchor="middle" font-size="10" font-weight="normal" fill="#555">$233</text>
<line x1="888.2" x2="888.2" y1="818.5" y2="825.5" stroke="#666" stroke-width="1"/>
<text x="888.2" y="843.3" text-anchor="middle" font-size="10.7" fill="#444">Net Debt</text>
<text x="888.2" y="853.3" text-anchor="middle" font-size="10.7" fill="#444">Paydown</text>
<line x1="1015.2" x2="1015.2" y1="818.5" y2="818.5" stroke="#d4d4d4" stroke-width="1" stroke-dasharray="4 3"/>
<rect x="964.2" y="675.7" width="102" height="142.8" fill="url(#gn)"/>
<text x="1015.2" y="671.3" text-anchor="middle" font-size="10.3" font-weight="bold" fill="#3a3a3a">2.74x</text>
<text x="1015.2" y="687.4" text-anchor="middle" font-size="10" font-weight="bold" fill="#fff">$2,604</text>
<line x1="1015.2" x2="1015.2" y1="818.5" y2="825.5" stroke="#666" stroke-width="1"/>
<text x="1015.2" y="843.3" text-anchor="middle" font-size="10.7" fill="#444">Cumulative Exit</text>
<text x="1015.2" y="853.3" text-anchor="middle" font-size="10.7" fill="#444">Equity Value</text>
<line x1="304" x2="1091.5" y1="818.5" y2="818.5" stroke="#666" stroke-width="1.2"/>
</svg>
<svg class="abs" style="left:77.8px;top:578.6px" width="20" height="24" viewBox="0 0 20 24"><path d="M6.5 1.5 a1.6 1.6 0 0 1 3.2 0 V9 L9.7 7.5 a1.5 1.5 0 0 1 3 0 V9.5 L12.7 8.5 a1.4 1.4 0 0 1 2.8 0 V10.5 L15.5 9.8 a1.3 1.3 0 0 1 2.6 0 V16 c0 4 -2 6.5 -5.5 6.5 H10 c-2.5 0 -3.8 -1.2 -5.2 -3.6 L2 14 c-0.8 -1.4 0.8 -2.6 2 -1.5 L6.5 15 Z" fill="#fff" stroke="#223" stroke-width="1.1" stroke-linejoin="round"/></svg>
</body></html>
